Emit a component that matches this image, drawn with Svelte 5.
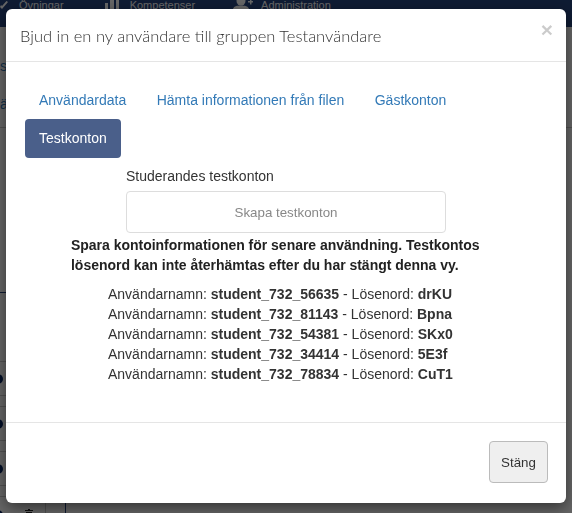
<script>
  const tabs = ["Användardata", "Hämta informationen från filen", "Gästkonton", "Testkonton"];
  const active = "Testkonton";
  const accounts = [
    { user: "student_732_56635", pass: "drKU" },
    { user: "student_732_81143", pass: "Bpna" },
    { user: "student_732_54381", pass: "SKx0" },
    { user: "student_732_34414", pass: "5E3f" },
    { user: "student_732_78834", pass: "CuT1" }
  ];
  const rows = [1, 2, 3];
</script>

<div class="page">
  <nav class="topbar">
    <svg class="logo" viewBox="0 0 8 9"><path d="M0 7l2 2 6-7-1.500-1-4.500 5-1-1z"/></svg>
    <span class="nav-item first">Övningar</span>
    <svg class="bars" viewBox="0 0 14 9"><path d="M0 3h3v6H0zM5 0h4v9H5zM11 0h3v9h-3z"/></svg>
    <span class="nav-item second">Kompetenser</span>
    <svg class="user" viewBox="0 0 21 9"><circle cx="9" cy="1" r="4.500"/><path d="M1 9c1-3 4-3.500 8-3.500s7 .5 8 3.500zM16 1h2v-2h1.500v2h2v1.500h-2v2H18v-2h-2z"/></svg>
    <span class="nav-item third">Administration</span>
  </nav>

  <section class="intro">
    <p>st</p>
    <p>ä</p>
  </section>

  <section class="blue-block"></section>

  <div class="row-list">
    {#each rows as r (r)}
      <div class="row"><span class="dot"></span></div>
    {/each}
    <div class="row last">
      <span class="dot"></span>
      <svg class="trash" viewBox="0 0 8 9"><path d="M3 0h2v1h3v1H0V1h3zM1 3h6v6H1z"/></svg>
      <span class="cell-a"></span>
      <span class="cell-b"></span>
    </div>
  </div>
</div>

<div class="backdrop"></div>

<div class="modal">
  <header class="modal-header">
    <h4>Bjud in en ny användare till gruppen Testanvändare</h4>
    <button class="close">×</button>
  </header>

  <div class="modal-body">
    <ul class="pills">
      {#each tabs as tab}
        <li class:active={tab === active}><a href="#top">{tab}</a></li>
      {/each}
    </ul>

    <div class="create">
      <label for="create-btn">Studerandes testkonton</label>
      <button id="create-btn" class="create-btn">Skapa testkonton</button>
    </div>

    <p class="notice">Spara kontoinformationen för senare användning. Testkontos lösenord kan inte återhämtas efter du har stängt denna vy.</p>

    <div class="accounts">
      {#each accounts as a}
        <div>Användarnamn: <b>{a.user}</b> - Lösenord: <b>{a.pass}</b></div>
      {/each}
    </div>
  </div>

  <footer class="modal-footer">
    <button class="btn-close">Stäng</button>
  </footer>
</div>

<style>
  :global(body) {
    margin: 0;
    font-family: "Liberation Sans", Arial, sans-serif;
    font-size: 14px;
    line-height: 20px;
    color: #333;
    background: #fff;
  }

  .page {
    height: 513px;
    overflow: hidden;
  }

  .topbar {
    display: flex;
    align-items: flex-start;
    height: 27px;
    background: #25447f;
    color: #fff;
    font-size: 11px;
    line-height: 11px;
  }

  .logo {
    width: 8px;
    height: 9px;
    fill: #fff;
  }

  .first {
    margin-left: 11px;
  }

  .bars {
    width: 14px;
    height: 9px;
    margin-left: 41px;
    fill: #fff;
  }

  .second {
    margin-left: 11px;
  }

  .user {
    width: 21px;
    height: 9px;
    margin-left: 37px;
    fill: #fff;
  }

  .third {
    margin-left: 8px;
  }

  .intro {
    height: 99px;
    padding-top: 1px;
    border-bottom: 1px solid #ccc;
    color: #337ab7;
  }

  .intro p {
    margin: 28px 0 0;
  }

  .intro p + p {
    margin-top: 18px;
  }

  .blue-block {
    width: 100px;
    height: 164px;
    border-bottom: 1px solid #25447f;
  }

  .row-list {
    display: flex;
    flex-direction: column;
    gap: 10px;
    width: 100px;
    margin-top: 68px;
  }

  .row {
    display: flex;
    align-items: center;
    height: 33px;
    border-top: 1px solid #ccc;
    border-bottom: 1px solid #ccc;
  }

  .row.last {
    align-items: flex-end;
    height: 40px;
    border-bottom: 0;
  }

  .dot {
    width: 10px;
    height: 10px;
    margin-left: -7px;
    border-radius: 50%;
    background: #00205f;
  }

  .row.last .dot {
    margin-bottom: 17px;
  }

  .trash {
    width: 8px;
    height: 9px;
    margin: 0 0 19px 22px;
    fill: #222;
  }

  .cell-a {
    height: 40px;
    margin-left: 12px;
    border-left: 1px solid #ccc;
  }

  .cell-b {
    height: 40px;
    margin-left: 19px;
    border-left: 1px solid #25447f;
  }

  .backdrop {
    position: fixed;
    inset: 0;
    background: rgba(0, 0, 0, 0.6);
  }

  .modal {
    position: fixed;
    top: 9px;
    left: 6px;
    width: 560px;
    height: 494px;
    display: flex;
    flex-direction: column;
    background: #fff;
    border-radius: 6px;
    box-shadow: 0 5px 15px rgba(0, 0, 0, 0.5);
  }

  .modal-header {
    display: flex;
    align-items: flex-start;
    justify-content: space-between;
    height: 53px;
    box-sizing: border-box;
    padding: 15px 13px 15px 14px;
    border-bottom: 1px solid #e5e5e5;
  }

  h4 {
    margin: 0;
    font-family: Lato, "Liberation Sans", sans-serif;
    font-size: 16.5px;
    font-weight: 300;
    line-height: 25px;
  }

  .close {
    padding: 0;
    border: 0;
    background: none;
    font-family: inherit;
    font-size: 21px;
    font-weight: 700;
    line-height: 10px;
    color: #000;
    opacity: 0.2;
    margin-top: 1px;
  }

  .modal-body {
    flex: 1;
    padding: 18px 19px 0;
  }

  .pills {
    display: flex;
    flex-wrap: wrap;
    gap: 0 2.5px;
    margin: 0;
    padding: 0;
    list-style: none;
  }

  .pills a {
    display: block;
    padding: 10px 14px 9px;
    border-radius: 4px;
    color: #337ab7;
    text-decoration: none;
  }

  .pills .active a {
    padding: 9px 14px 10px;
    color: #fff;
    background: #4a5f8a;
  }

  .create {
    width: 320px;
    margin: 8px auto 0;
  }

  .create label {
    display: block;
    margin-bottom: 5px;
  }

  .create-btn {
    display: block;
    width: 100%;
    height: 42px;
    border: 1px solid #ddd;
    border-radius: 4px;
    background: #fff;
    color: #888;
    font-family: inherit;
    font-size: 13.33px;
  }

  .notice {
    width: 410px;
    margin: 2px 0 0 46px;
    font-weight: 700;
    letter-spacing: -0.02px;
    color: #222;
  }

  .accounts {
    margin: 9px 0 0 83px;
  }

  .accounts b {
    color: #333;
  }

  .modal-footer {
    display: flex;
    justify-content: flex-end;
    height: 81px;
    box-sizing: border-box;
    padding: 18px 18px 0;
    border-top: 1px solid #e5e5e5;
  }

  .btn-close {
    width: 59px;
    height: 42px;
    border: 1px solid #bbb;
    border-radius: 4px;
    background: #efefef;
    color: #333;
    font-family: inherit;
    font-size: 13.33px;
  }
</style>
